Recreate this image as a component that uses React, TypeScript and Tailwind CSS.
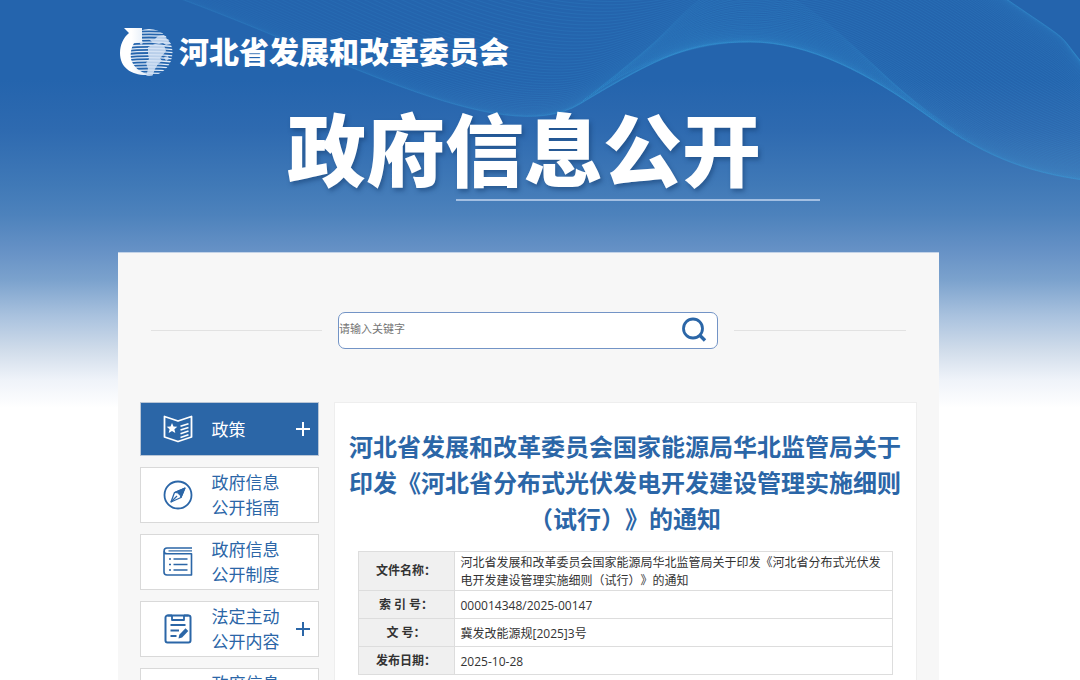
import type { ReactNode } from "react";
import clsx from "clsx";

// Each wave is a list of numbers for: M x y C (3 points) S (2 points) ...
const LOWER = [150, -12, 330, 50, 500, 152, 580, 104, 690, 42, 750, 42, 870, 75, 925, 114, 1020, 172, 1090, 181];
const UPPER = [420, -190, 520, -60, 600, -90, 680, -70, 760, -90, 820, -80, 920, -60, 1002, -4, 1050, 26, 1090, 72];
const CREST = [570, 110, 586, 100, 603, 86, 620, 77, 690, 42, 750, 42, 870, 75, 925, 114, 1010, 170, 1060, 177];
const TENT = [570, 110, 586, 98, 620, 72, 650, 46, 700, -14, 745, -16, 840, 34, 890, 80, 1010, 165, 1060, 177];

function wavePath(from: number[], to: number[], t: number) {
  const p = from.map((v, i) => (v + (to[i] - v) * t).toFixed(1));
  return `M${p[0]} ${p[1]} C${p.slice(2, 8).join(" ")} S${p.slice(8, 12).join(" ")} S${p.slice(12, 16).join(" ")} S${p.slice(16, 20).join(" ")}`;
}

// eased so that the lines crowd together at both edges of the band
const ease = (t: number) => (1 - Math.cos(Math.PI * t)) / 2;

const meshLines = Array.from({ length: 90 }, (_, i) => wavePath(LOWER, UPPER, ease(i / 89)));
const crestLines = Array.from({ length: 30 }, (_, i) => wavePath(CREST, TENT, Math.pow(i / 29, 1.5)));

function Waves() {
  return (
    <svg
      className="absolute inset-0 h-full w-full"
      viewBox="0 0 1080 252"
      preserveAspectRatio="xMaxYMin slice"
      fill="none"
      aria-hidden="true"
    >
      <defs>
        <linearGradient id="meshFade" gradientUnits="userSpaceOnUse" x1="150" y1="0" x2="1080" y2="0">
          <stop offset="0" stopColor="#38a0dc" stopOpacity="0.06" />
          <stop offset="0.45" stopColor="#38a0dc" stopOpacity="0.15" />
          <stop offset="1" stopColor="#38a0dc" stopOpacity="0.15" />
        </linearGradient>
        <linearGradient id="crestFade" gradientUnits="userSpaceOnUse" x1="570" y1="0" x2="980" y2="0">
          <stop offset="0" stopColor="#38a0dc" stopOpacity="0" />
          <stop offset="0.3" stopColor="#38a0dc" stopOpacity="0.12" />
          <stop offset="0.7" stopColor="#38a0dc" stopOpacity="0.1" />
          <stop offset="1" stopColor="#38a0dc" stopOpacity="0" />
        </linearGradient>
      </defs>
      <g stroke="url(#meshFade)">
        {meshLines.map((d) => (
          <path key={d} d={d} />
        ))}
      </g>
      <g stroke="url(#crestFade)">
        {crestLines.map((d) => (
          <path key={d} d={d} />
        ))}
      </g>
    </svg>
  );
}

function Logo() {
  return (
    <svg width="54" height="50" viewBox="0 0 54 50" aria-hidden="true">
      <defs>
        <clipPath id="globe">
          <circle cx="30" cy="25.500" r="23.500" />
        </clipPath>
        <linearGradient id="horn" x1="0" y1="0" x2="1" y2="0">
          <stop offset="0.4" stopColor="#ffffff" />
          <stop offset="1" stopColor="#dce8f6" />
        </linearGradient>
      </defs>
      <g clipPath="url(#globe)">
        <g stroke="#dfeaf7" strokeWidth="1.300">
          {Array.from({ length: 15 }, (_, i) => (
            <path key={i} d={`M6 ${4 + i * 3.1}Q30 ${1.5 + i * 3.1} 54 ${4 + i * 3.1}`} fill="none" />
          ))}
        </g>
        <g fill="#d3e2f4" fillOpacity="0.85">
          <path d="M39 9l6-1 3 4 4 5-5 1-3-2-4 1-6-1-4-4 5 1z" />
          <path d="M29 20l7-3 9 1 2 6-3 4-3 3 2 3-4 3-3 5-3 8h-6l2-8-2-6 3-4-1-5z" />
          <path d="M20 15l3-2 1 3-2 2zM45 30l4-1 1 3-3 2z" />
        </g>
      </g>
      <path d="M5 1h18v14l-8 1c-3 5-4 11-3 16 2 8 9 13 18 16C13 49 1 41 1 26 1 18 4 11 10 6z" fill="url(#horn)" />
    </svg>
  );
}

function MenuIcon({ children }: { children: ReactNode }) {
  return (
    <svg
      className="shrink-0"
      width="30"
      height="30"
      viewBox="0 0 30 30"
      fill="none"
      stroke="currentColor"
      strokeWidth="1.800"
      strokeLinejoin="round"
      aria-hidden="true"
    >
      {children}
    </svg>
  );
}

const policyIcon = (
  <MenuIcon>
    <path d="M1.500 2.500L15 7l13.500-4.500v20.500L15 27.500 1.500 23z" />
    <path d="M9 9l1.500 3.500 3.800.3-2.900 2.500.9 3.700L9 17l-3.300 2 .9-3.700-2.900-2.500 3.800-.3z" fill="currentColor" stroke="none" />
    <path d="M17.500 12.300l8-2.600M17.500 16l8-2.600M17.500 19.700l8-2.600M17.500 23.400l8-2.600" strokeWidth="1.600" />
  </MenuIcon>
);

const guideIcon = (
  <MenuIcon>
    <circle cx="15" cy="15" r="13.500" />
    <path d="M22 8l-10.500 4.500L8 22l10-4.500z" strokeWidth="1.300" />
    <path d="M22 8l-10.500 4.500 3 .3 2.700 2.700.8 2z" fill="currentColor" strokeWidth="1" />
    <path d="M8 22l6-6" strokeWidth="1.200" />
  </MenuIcon>
);

const systemIcon = (
  <MenuIcon>
    <path d="M29 1H4a2.900 2.900 0 0 0 0 5.800H28.500v21.200H4a3 3 0 0 1-3-3V4" strokeWidth="1.600" />
    <path d="M5.500 3.900H29" strokeWidth="1.200" />
    <path d="M10.500 12h14M10.500 17.500h14M10.500 23h14" strokeWidth="1.500" />
    <path d="M6 12h2M6 17.500h2M6 23h2" strokeWidth="1.500" />
  </MenuIcon>
);

const contentIcon = (
  <MenuIcon>
    <path d="M9 1.500H4.500A2 2 0 0 0 2.500 3.500v23a2 2 0 0 0 2 2h21a2 2 0 0 0 2-2V3.500a2 2 0 0 0-2-2H21" strokeWidth="2" />
    <path d="M4.500 1.500h21M9 1.500v4.500h12V1.500" />
    <path d="M7.500 11h15M7.500 16.500h8.500M7.500 22h6" />
    <path d="M15.500 24.500l.8-3.800 6.200-6.400 2.800 2.700-6.200 6.400z" fill="currentColor" stroke="none" />
  </MenuIcon>
);

const reportIcon = (
  <MenuIcon>
    <path d="M9 -1h9l4 4v24H9z" />
    <path d="M17 -1v5h5" />
  </MenuIcon>
);

const menu = [
  { lines: ["政策"], icon: policyIcon, active: true, expandable: true },
  { lines: ["政府信息", "公开指南"], icon: guideIcon },
  { lines: ["政府信息", "公开制度"], icon: systemIcon },
  { lines: ["法定主动", "公开内容"], icon: contentIcon, expandable: true },
  { lines: ["政府信息", "公开年报"], icon: reportIcon },
];

const details = [
  {
    label: "文件名称：",
    value: "河北省发展和改革委员会国家能源局华北监管局关于印发《河北省分布式光伏发电开发建设管理实施细则（试行）》的通知",
  },
  { label: "索 引 号：", value: "000014348/2025-00147" },
  { label: "文 号：", value: "冀发改能源规[2025]3号" },
  { label: "发布日期：", value: "2025-10-28" },
];

function Sidebar() {
  return (
    <nav className="w-[179px] shrink-0">
      <ul className="flex flex-col gap-[11px]">
        {menu.map((item) => (
          <li key={item.lines.join("")}>
            <a
              href="#"
              className={clsx(
                "flex items-center border pl-[22px] pr-[7px] text-[17px] leading-[25px]",
                item.active
                  ? "h-[54px] border-[#b9c6d6] bg-[#2b66a7] text-white"
                  : "h-14 border-[#d9d9d9] bg-white text-[#2b66a7]"
              )}
            >
              {item.icon}
              <span className="ml-[19px] flex-1">
                {item.lines.map((line) => (
                  <span key={line} className="block">
                    {line}
                  </span>
                ))}
              </span>
              {item.expandable && (
                <svg width="16" height="16" viewBox="0 0 16 16" stroke="currentColor" strokeWidth="2" aria-hidden="true">
                  <path d="M8 1v14M1 8h14" />
                </svg>
              )}
            </a>
          </li>
        ))}
      </ul>
    </nav>
  );
}

export default function App() {
  return (
    <div className="h-screen overflow-hidden bg-white bg-[linear-gradient(#2464ad_0px,#2464ad_80px,#2e6ab0_130px,#4079b7_185px,#4d82bc_215px,#6792c6_252px,#7ba2cd_280px,#a8c1de_315px,#d0dcea_350px,#eff3f9_380px,#ffffff_408px)] font-['Open_Sans','Noto_Sans_CJK_SC',sans-serif] [text-spacing-trim:space-all]">
      <header className="relative h-[252px] pr-[22px]">
        <Waves />
        <div className="relative mx-auto max-w-[820px] pt-[27px]">
          <a href="#" className="flex items-center gap-1.5 text-[30px] leading-[50px] font-black text-white">
            <Logo />
            河北省发展和改革委员会
          </a>
          <h1 className="mt-[26px] ml-[168px] text-[79px] leading-[96px] font-black text-white [text-shadow:2px_3px_4px_rgba(20,60,110,0.5)]">
            政府信息公开
          </h1>
          <div className="mr-[119px] ml-[337px] h-0.5 bg-[#a3bfe2]" />
        </div>
      </header>

      <div className="pr-6">
        <main className="mx-auto max-w-[821px] border-t border-[#c3d3e8] bg-[#f7f7f7] px-[22px] pt-[59px] pb-10">
          <form className="mb-[53px] flex items-center gap-4 px-[11px]" onSubmit={(e) => e.preventDefault()}>
            <span className="h-px flex-1 bg-[#e2e2e2]" />
            <div className="flex h-[37px] w-[380px] items-center rounded-[7px] border border-[#7394c6] bg-white">
              <input
                type="text"
                aria-label="请输入关键字"
                placeholder="请输入关键字"
                className="h-8 min-w-0 flex-1 bg-transparent pb-1 text-[11px] outline-none placeholder:text-[#757575]"
              />
              <button type="submit" aria-label="搜索" className="mr-[10px] pb-0.5 text-[#2b66a7]">
                <svg width="26" height="26" viewBox="0 0 26 26" fill="none" stroke="currentColor">
                  <circle cx="12" cy="11.500" r="9.500" strokeWidth="2.800" />
                  <path d="M18.500 18l5.500 5.500" strokeWidth="3.400" />
                </svg>
              </button>
            </div>
            <span className="h-px flex-1 bg-[#e2e2e2]" />
          </form>

          <div className="flex items-start gap-[15px]">
            <Sidebar />
            <article className="min-h-[400px] flex-1 border border-[#eeeeee] bg-white px-[14px] pt-[26px]">
              <h2 className="text-center text-2xl leading-9 font-bold text-[#2b66a7]">
                河北省发展和改革委员会国家能源局华北监管局关于印发《河北省分布式光伏发电开发建设管理实施细则（试行）》的通知
              </h2>
              <div className="mt-[14px] px-[9px]">
                <table className="w-full border-collapse text-xs leading-[18px] text-[#333333]">
                  <tbody>
                    {details.map((row) => (
                      <tr key={row.label} className="h-7">
                        <th scope="row" className="w-24 border border-[#dddddd] bg-[#f0f0f0] font-bold">
                          {row.label}
                        </th>
                        <td className="border border-[#dddddd] pt-0.5 pr-2 pl-1.5">{row.value}</td>
                      </tr>
                    ))}
                  </tbody>
                </table>
              </div>
            </article>
          </div>
        </main>
      </div>
    </div>
  );
}
